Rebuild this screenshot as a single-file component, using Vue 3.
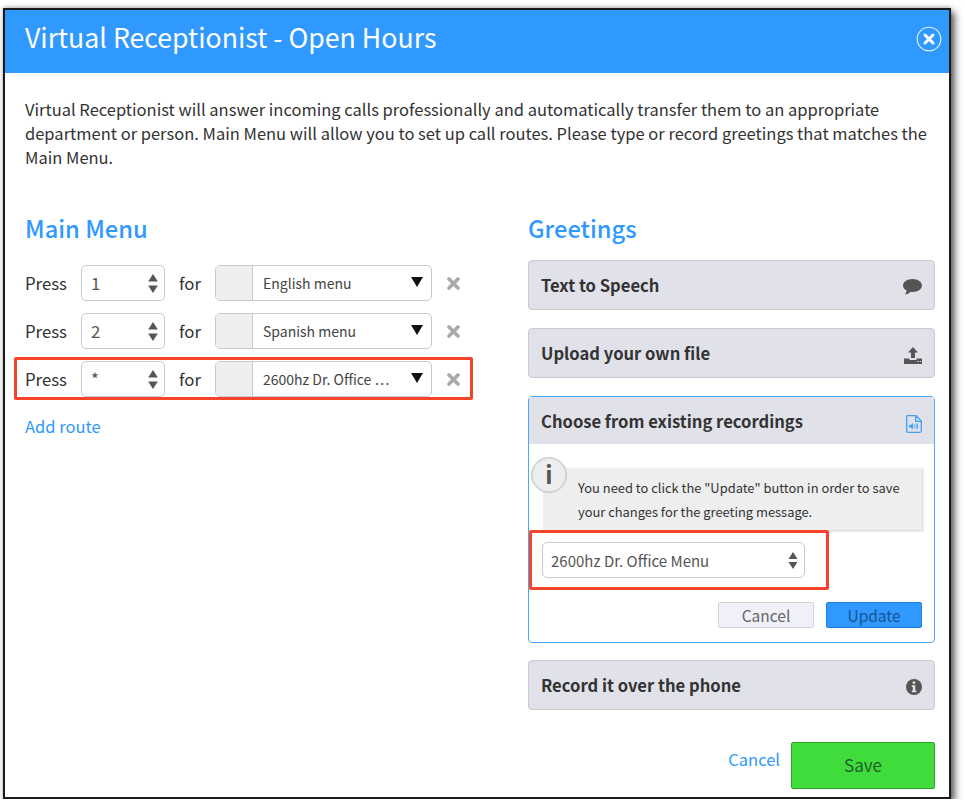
<script setup>
const routes = [
  { key: '1', target: 'English menu', marked: false },
  { key: '2', target: 'Spanish menu', marked: false },
  { key: '*', target: '2600hz Dr. Office …', marked: true }
]
</script>

<template>
  <div class="frame">
    <header class="head">
      <h1>Virtual Receptionist - Open Hours</h1>
      <svg class="close" width="26" height="26" viewBox="0 0 26 26">
        <circle cx="13" cy="13" r="11.8" fill="none" stroke="#fff" stroke-width="1.1" opacity=".9" />
        <path d="M9 9l8 8M17 9l-8 8" stroke="#fff" stroke-width="3" stroke-linecap="round" />
      </svg>
    </header>

    <main class="body">
      <p class="intro">Virtual Receptionist will answer incoming calls professionally and automatically transfer them to an appropriate department or person. Main Menu will allow you to set up call routes. Please type or record greetings that matches the Main Menu.</p>

      <div class="cols">
        <section class="left">
          <h2>Main Menu</h2>
          <div v-for="r in routes" :key="r.key" class="row">
            <span class="press">Press</span>
            <div class="spin">
              <span>{{ r.key }}</span>
              <svg class="updown" width="10" height="19" viewBox="0 0 10 19">
                <path d="M5 0l4.800 7.500H.2zM5 19L.2 11.500h9.600z" fill="#555" />
              </svg>
            </div>
            <span class="for">for</span>
            <div class="group">
              <span class="addon"></span>
              <div class="pick">
                <span>{{ r.target }}</span>
                <svg class="caret" width="12" height="10" viewBox="0 0 12 10"><path d="M0 0h12L6 10z" fill="#111" /></svg>
              </div>
            </div>
            <svg class="del" width="13" height="13" viewBox="0 0 13 13">
              <path d="M2 2l9 9M11 2l-9 9" stroke="#a9a9a9" stroke-width="3.600" stroke-linecap="round" />
            </svg>
            <i v-if="r.marked" class="mark mark-row"></i>
          </div>
          <a class="add">Add route</a>
        </section>

        <section class="right">
          <h2>Greetings</h2>

          <div class="panel">
            <strong>Text to Speech</strong>
            <svg width="19" height="17" viewBox="0 0 19 17">
              <path d="M9.500 0C4.300 0 0 2.900 0 6.500c0 2.100 1.400 3.900 3.600 5.100-.2 1.600-.9 3-1.600 4 2.200-.3 4-1.500 5.300-2.700.7.100 1.400.1 2.200.1 5.200 0 9.500-2.900 9.500-6.500S14.700 0 9.500 0z" fill="#555" />
            </svg>
          </div>

          <div class="panel">
            <strong>Upload your own file</strong>
            <svg width="18" height="17" viewBox="0 0 18 17">
              <path d="M9 0l5 5.500h-3V11H7V5.500H4zM0 11.500h5.500V13h7v-1.500H18V17H0z" fill="#555" />
              <path d="M13.500 14.500h1.500M16 14.500h1" stroke="#e1e1e9" stroke-width="1" />
            </svg>
          </div>

          <div class="panel-open">
            <div class="panel-top">
              <strong>Choose from existing recordings</strong>
              <svg width="16" height="18" viewBox="0 0 16 18">
                <path d="M1.500.7h8.500l5.300 5.300v9.800a1.500 1.500 0 0 1-1.500 1.500H1.500A1 1 0 0 1 .7 16.300V1.700a1 1 0 0 1 .8-1zM9.700.7v5.600h5.600" fill="none" stroke="#3ea3fb" stroke-width="1.300" />
                <path d="M3 10h1.600L7 8v6.500L4.600 12.500H3z" fill="#3ea3fb" />
                <path d="M8.500 9.500q1.200 1.700 0 3.500M10.500 8.500q2 2.700 0 5.500" fill="none" stroke="#3ea3fb" stroke-width="1.200" />
              </svg>
            </div>
            <div class="panel-body">
              <div class="note">
                <span class="bubble">i</span>
                <p>You need to click the "Update" button in order to save your changes for the greeting message.</p>
              </div>
              <div class="native">
                <span>2600hz Dr. Office Menu</span>
                <svg class="updown" width="10" height="19" viewBox="0 0 10 19">
                  <path d="M5 1l4.500 7H.5zM5 18L.5 11h9z" fill="#555" />
                </svg>
                <i class="mark mark-select"></i>
              </div>
              <div class="actions">
                <button class="btn ghost">Cancel</button>
                <button class="btn primary">Update</button>
              </div>
            </div>
          </div>

          <div class="panel">
            <strong>Record it over the phone</strong>
            <svg width="16" height="16" viewBox="0 0 16 16">
              <circle cx="8" cy="8" r="8" fill="#555" />
              <path d="M6.700 2.500h2.600v2.200H6.700zM5.800 6.200h3.500v5.200h1v1.800H5.800v-1.800h1V8H5.800z" fill="#e1e1e9" />
            </svg>
          </div>
        </section>
      </div>

      <footer class="foot">
        <a class="cancel">Cancel</a>
        <button class="save">Save</button>
      </footer>
    </main>
  </div>
</template>

<style>
html, body { background: #fff; margin: 0; }
</style>

<style scoped>
.frame {
  box-sizing: border-box;
  width: 948px;
  height: 791px;
  margin: 8px 0 0 3px;
  border: 2px solid #1a1a1a;
  background: #fff;
  box-shadow: 4px 4px 7px rgba(0, 0, 0, .6), 0 -1px 4px rgba(0, 0, 0, .25);
  color: #333;
  font-family: "Noto Sans CJK SC", "Noto Sans", sans-serif;
}
.head {
  height: 63px;
  background: #2f99ff;
  display: flex;
  align-items: center;
  justify-content: space-between;
  padding: 0 7px 0 20px;
  box-sizing: border-box;
}
h1 {
  margin: 0 0 9px;
  font-size: 26.700px;
  line-height: 36px;
  font-weight: 400;
  color: #fff;
}
.close { margin-bottom: 5px; }
.body { padding: 24px 14px 0 20px; }
.intro {
  margin: 0;
  font-size: 16.500px;
  line-height: 24px;
  width: 910px;
}
.cols {
  display: grid;
  grid-template-columns: 503px 407px;
  margin-top: 44px;
}
h2 {
  margin: 0;
  font-size: 23.700px;
  line-height: 30px;
  font-weight: 500;
  color: #2f99ff;
}
.left h2 { margin-bottom: 22px; }
.right h2 { margin-bottom: 17px; }
.row {
  position: relative;
  display: flex;
  align-items: center;
  height: 36px;
  margin-bottom: 12px;
  font-size: 16.800px;
}
.press { width: 56px; }
.spin {
  box-sizing: border-box;
  width: 84px;
  height: 36px;
  display: flex;
  align-items: center;
  justify-content: space-between;
  padding: 0 6px 0 9px;
  border: 1px solid #c9c9d1;
  border-radius: 5px;
  color: #555;
}
.for { width: 36px; margin-left: 14px; }
.group {
  box-sizing: border-box;
  width: 217px;
  height: 36px;
  display: flex;
  border: 1px solid #c9c9d1;
  border-radius: 5px;
  overflow: hidden;
}
.addon {
  width: 36px;
  background: #eee;
  border-right: 1px solid #c9c9d1;
}
.pick {
  flex: 1;
  display: flex;
  align-items: center;
  justify-content: space-between;
  padding: 0 8px 0 10px;
  font-size: 14px;
  color: #444;
}
.caret { margin-bottom: 3px; }
.del { margin-left: 15px; }
.mark {
  position: absolute;
  border: 3px solid #f4452a;
  border-radius: 2px;
  box-sizing: border-box;
  pointer-events: none;
}
.mark-row { left: -11px; top: -4px; width: 459px; height: 43px; }
.add {
  display: block;
  margin-top: 16px;
  font-size: 16.500px;
  line-height: 26px;
  color: #2f99ff;
}
.panel {
  box-sizing: border-box;
  height: 50px;
  margin-bottom: 18px;
  padding: 0 12px 0 12px;
  display: flex;
  align-items: center;
  justify-content: space-between;
  background: #e1e1e9;
  border: 1px solid #c9c9d1;
  border-radius: 4px;
  font-size: 16.600px;
}
.panel strong, .panel-top strong { font-weight: 700; color: #333; }
.panel svg { margin-top: 4px; }
.panel-open {
  box-sizing: border-box;
  height: 247px;
  margin-bottom: 17px;
  border: 1px solid #4aa8ff;
  border-radius: 4px;
  font-size: 16.600px;
}
.panel-top {
  height: 47px;
  padding: 0 12px 0 12px;
  display: flex;
  align-items: center;
  justify-content: space-between;
  background: #e1e1e9;
}
.panel-top svg { margin-top: 6px; }
.panel-body { padding: 24px 12px 0 13px; }
.note {
  position: relative;
  box-sizing: border-box;
  height: 62px;
  margin-left: 1px;
  padding: 8px 10px 0 35px;
  background: #eee;
  box-shadow: 1px 1px 2px rgba(0, 0, 0, .18);
}
.note p {
  margin: 0;
  font-size: 12.900px;
  line-height: 24px;
}
.bubble {
  position: absolute;
  left: -12px;
  top: -11px;
  box-sizing: border-box;
  width: 36px;
  height: 36px;
  border-radius: 50%;
  background: #eee;
  border: 1px solid #c4c4c4;
  box-shadow: inset 0 0 2px rgba(0,0,0,.2);
  font-size: 24px;
  font-weight: 700;
  line-height: 32px;
  text-align: center;
  color: #555;
}
.native {
  position: relative;
  box-sizing: border-box;
  width: 263px;
  height: 36px;
  margin-top: 12px;
  display: flex;
  align-items: center;
  justify-content: space-between;
  padding: 0 6px 0 8px;
  border: 1px solid #c9c9d1;
  border-radius: 5px;
  font-size: 15px;
  color: #555;
}
.mark-select { left: -14px; top: -13px; width: 300px; height: 60px; }
.actions {
  display: flex;
  justify-content: flex-end;
  gap: 12px;
  margin-top: 24px;
}
.btn {
  box-sizing: border-box;
  width: 96px;
  height: 26px;
  padding: 0;
  border-radius: 2px;
  font: 400 15.500px/24px "Noto Sans CJK SC", "Noto Sans", sans-serif;
}
.ghost { background: #f0f0f8; border: 1px solid #d2d2da; color: #666; }
.primary { background: #2f99ff; border: 1px solid #1b7fdc; color: #17568f; }
.foot {
  display: flex;
  justify-content: flex-end;
  align-items: flex-start;
  gap: 11px;
  margin-top: 14px;
}
.cancel {
  font-size: 16.500px;
  line-height: 26px;
  margin-top: 4px;
  color: #2f99ff;
}
.save {
  box-sizing: border-box;
  width: 144px;
  height: 47px;
  padding: 0 0 2px;
  background: #3fdc3c;
  border: 1px solid #2fa52c;
  border-radius: 2px;
  color: #22602a;
  font: 400 17px/26px "Noto Sans CJK SC", "Noto Sans", sans-serif;
}
</style>
